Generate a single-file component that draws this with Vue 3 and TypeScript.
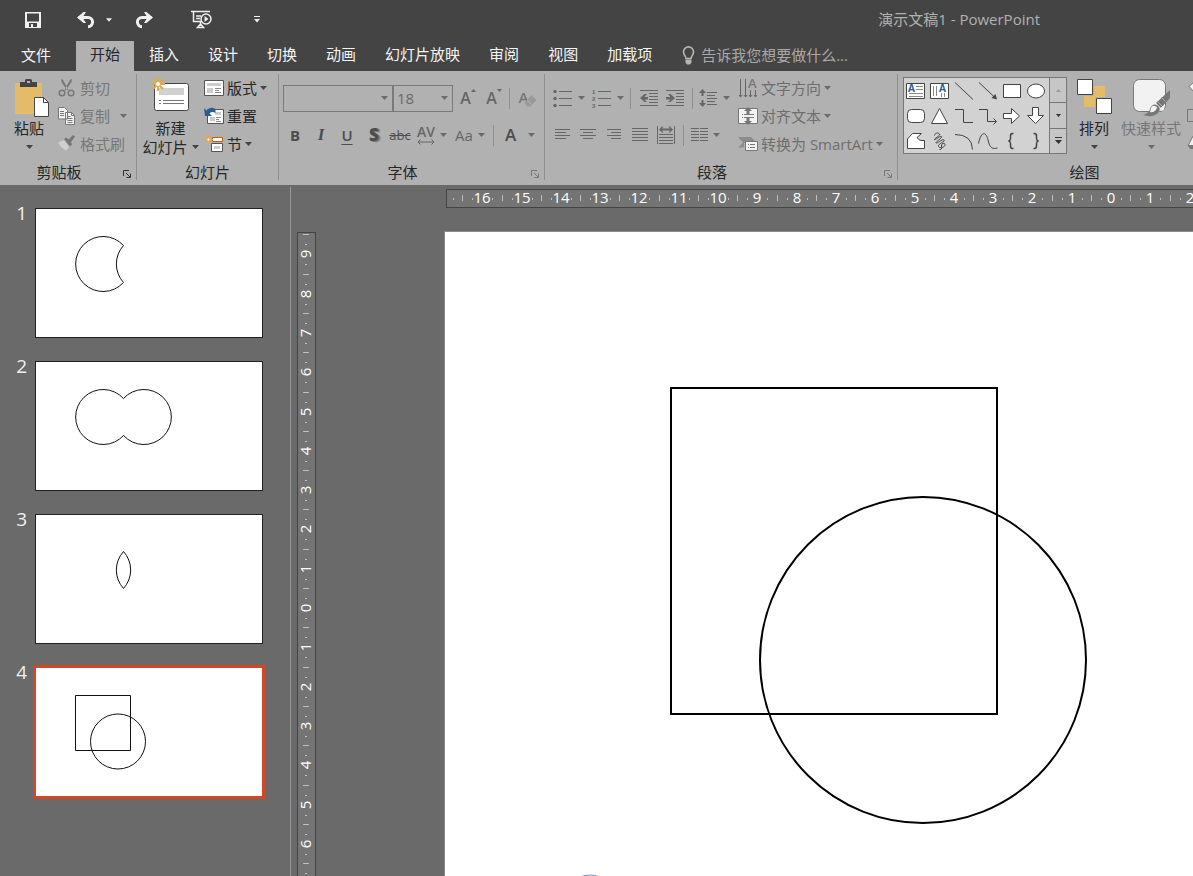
<script setup lang="ts">
import { computed, ref } from 'vue'

interface Slide {
  id: number
  path: string
}

interface Mark {
  pos: number
  label: string
}

const tabs: string[] = ['开始', '插入', '设计', '切换', '动画', '幻灯片放映', '审阅', '视图', '加载项']
const activeTab = ref('开始')
const query = ref('')
const fontName = ref('')
const fontSize = ref('18')

const slides: Slide[] = [
  { id: 1, path: 'M87.5 36.5A27.5 27.5 0 1 0 87.5 73.5A27.5 27.5 0 0 1 87.5 36.5Z' },
  { id: 2, path: 'M87.5 36.5A27.5 27.5 0 1 0 87.5 73.5A27.5 27.5 0 1 0 87.5 36.5Z' },
  { id: 3, path: 'M87.5 36.5A27.5 27.5 0 0 0 87.5 73.5A27.5 27.5 0 0 0 87.5 36.5Z' },
  { id: 4, path: 'M39.5 27.5h55v55h-55ZM54.5 73.5a27.5 27.5 0 1 0 55 0a27.5 27.5 0 1 0 -55 0Z' },
]
const selected = ref(4)

/* One centimetre on the rulers, in pixels */
const unit = 39.3
const half = Math.round(unit / 2)
const quarter = Math.round(unit / 4)

function marks(zero: number, before: number, after: number): Mark[] {
  const list: Mark[] = []
  for (let n = -before; n <= after; n++) {
    list.push({ pos: Math.round(zero + n * unit), label: String(Math.abs(n)) })
  }
  return list
}

const hMarks = computed(() => marks(664, 16, 17))
const vMarks = computed(() => marks(375, 9, 9))
</script>

<template>
  <div class="app">
    <header class="top">
      <div class="titlebar">
        <div class="qat">
          <button class="q q-save" aria-label="保存">
            <svg width="16" height="16" viewBox="0 0 16 16"><path fill="#f0f0f0" fill-rule="evenodd" d="M0 0h16v16H0ZM2 1.500v8h12v-8ZM4 11v4h2v-3h2v3h4v-4Z" /></svg>
          </button>
          <button class="q q-undo" aria-label="撤消">
            <svg width="18" height="16" viewBox="0 0 18 16"><path d="M1.500 5.500H11a4.500 4.500 0 0 1 0 9.200" fill="none" stroke="#f0f0f0" stroke-width="3" /><path d="M0 5.500L6.500 0h2.500L5.500 5.500L9 11H6.500Z" fill="#f0f0f0" /></svg>
          </button>
          <button class="q q-more" aria-label="撤消列表">
            <svg width="6" height="4" viewBox="0 0 7 4"><path d="M0 0h7L3.500 4z" fill="#f0f0f0" /></svg>
          </button>
          <button class="q q-redo" aria-label="恢复">
            <svg width="18" height="16" viewBox="0 0 18 16"><path d="M16.500 5.500H7a4.500 4.500 0 0 0 0 9.200" fill="none" stroke="#f0f0f0" stroke-width="3" /><path d="M18 5.500L11.500 0H9l3.500 5.500L9 11h2.500Z" fill="#f0f0f0" /></svg>
          </button>
          <button class="q q-show" aria-label="从头开始">
            <svg width="22" height="19" viewBox="0 0 22 19"><path d="M0 1.500h19M2.500 2v9.500h8M5 6h5M5 8.500h4M9.500 12v2l-3 3.500h6l-3-3.500" fill="none" stroke="#f0f0f0" stroke-width="1.500" /><circle cx="15" cy="9" r="5" fill="#444" stroke="#f0f0f0" stroke-width="1.500" /><path d="M13.500 6l4 3l-4 3z" fill="#f0f0f0" /></svg>
          </button>
          <button class="q q-custom" aria-label="自定义快速访问工具栏">
            <svg width="6" height="7" viewBox="0 0 6 7"><path d="M0 0h6v1H0zM0 3h6L3 6.500z" fill="#f0f0f0" /></svg>
          </button>
        </div>
        <h1 class="doc-title">演示文稿1 - PowerPoint</h1>
      </div>
      <nav class="tabs">
        <button class="tab file">文件</button>
        <button v-for="t in tabs" :key="t" class="tab" :class="{ active: t === activeTab }" @click="activeTab = t">{{ t }}</button>
        <label class="tell">
          <svg width="13" height="19" viewBox="0 0 13 19"><path d="M4 12.500C4 10 1.500 9 1.500 5.900a5 5 0 0 1 10 0C11.500 9 9 10 9 12.500Z" fill="none" stroke="#b5b5b5" stroke-width="1.600" /><path d="M3.500 13.500h6v3L8 18.500H5l-1.500-2z" fill="#b5b5b5" /></svg>
          <input v-model="query" type="text" aria-label="告诉我" placeholder="告诉我您想要做什么..." />
        </label>
      </nav>
    </header>

    <section class="ribbon">
      <div class="group clipboard">
        <div class="tools">
          <button class="big paste">
            <span class="pic">
              <svg width="34" height="38" viewBox="0 0 34 38"><path d="M0 4h27v31H0z" fill="#e3bb69" /><path d="M5 3h5V1.500Q10 0 11.500 0h4Q17 0 17 1.500V3h5v5H5z" fill="#444" /><path d="M12 2h3v2h-3z" fill="#b1b1b1" /><path d="M19.500 18.500h9l5 5v14h-14z" fill="#fff" stroke="#444" /><path d="M28.500 18.500v5h5" fill="none" stroke="#444" /></svg>
            </span>
            <span class="line1">粘贴</span>
            <span class="line2"><svg class="caret" viewBox="0 0 7 4"><path d="M0 0h7L3.500 4z" /></svg></span>
          </button>
          <div class="stack">
            <button class="row off">
              <svg width="18" height="18" viewBox="0 0 18 18"><g fill="none" stroke="#777"><circle cx="4" cy="14" r="2.800" stroke-width="1.500" /><circle cx="13" cy="14" r="2.800" stroke-width="1.500" /></g><path d="M3 0l2 1l4 7l1.500 3.500l-2-1L3.500 3zM14 0l-2 1l-4.500 8L6 12l2.500-1.500L13.500 3z" fill="#777" /></svg>
              <span>剪切</span>
            </button>
            <button class="row off">
              <svg width="18" height="18" viewBox="0 0 18 18"><path d="M.5.5h6l3 3v8.500h-9zM7.500 5.500h6l3 3v9h-9z" fill="#f2f2f2" stroke="#777" /><path d="M2 4.500h4M2 6.500h4M2 8.500h4M9.500 9.500h3M9.500 11.500h5M9.500 13.500h5M9.500 15.500h5M13.500 5.500v3h3" fill="none" stroke="#777" /></svg>
              <span>复制</span>
              <svg class="caret far" viewBox="0 0 7 4"><path d="M0 0h7L3.500 4z" /></svg>
            </button>
            <button class="row off">
              <svg width="18" height="18" viewBox="0 0 18 18"><path d="M0 7.500l6-2.500l5 7l-3 3.500Q3 13 0 7.500z" fill="#d0d0d0" /><path d="M6 4l2-1.500l2.500 2L15 0l2 1.500L13 7l1 2.500l-2 2z" fill="#777" /></svg>
              <span>格式刷</span>
            </button>
          </div>
        </div>
        <div class="caption"><span>剪贴板</span><button class="launch dark" aria-label="剪贴板选项"><svg width="8" height="8" viewBox="0 0 8 8"><path d="M.5 6V.5H6M3 3l4 4M7.500 3.500v4h-4" /></svg></button></div>
      </div>

      <div class="group slides-group">
        <div class="tools">
          <button class="big new-slide">
            <span class="pic">
              <svg width="39" height="36" viewBox="0 0 39 36"><rect x="3.500" y="6.500" width="34" height="27" rx="2" fill="#fff" stroke="#444" /><path d="M8 11h25v7H8z" fill="#d0d0d0" /><path d="M8 23.500h2M8 26.500h2M12 23.500h21M12 26.500h21" stroke="#777" /><path d="M7 0v14M0 7h14M2 2l10 10M12 2L2 12" stroke="#e3a74f" stroke-width="2" /><circle cx="7" cy="7" r="2.500" fill="#fff" stroke="#e3a74f" /></svg>
            </span>
            <span class="line1">新建</span>
            <span class="line2">幻灯片<svg class="caret" viewBox="0 0 7 4"><path d="M0 0h7L3.500 4z" /></svg></span>
          </button>
          <div class="stack">
            <button class="row">
              <svg width="20" height="18" viewBox="0 0 20 18"><path d="M.5 1.500h19v15H.5z" fill="#fff" stroke="#555" /><path d="M3 4h14v3H3zM3 9h6v5H3z" fill="#ccc" /><path d="M11 9.500h6M11 11.500h4M11 13.500h6" stroke="#888" /></svg>
              <span>版式</span><svg class="caret" viewBox="0 0 7 4"><path d="M0 0h7L3.500 4z" /></svg>
            </button>
            <button class="row">
              <svg width="20" height="18" viewBox="0 0 20 18"><path d="M3.500 2.500h16v14h-16z" fill="#fff" stroke="#555" /><path d="M11 5h6v3h-6zM6 10h5v4H6z" fill="#ccc" /><path d="M12 10.500h5M12 12.500h3M12 14.500h5" stroke="#888" /><path d="M0 1l1 8h7L5.500 6.500Q8 4 11.500 6V2Q6-1 2.500 3.500z" fill="#2b5c94" /></svg>
              <span>重置</span>
            </button>
            <button class="row">
              <svg width="20" height="18" viewBox="0 0 20 18"><path d="M8.500 2.500h10v4h-10z" fill="#fff" stroke="#c55a11" /><path d="M7.500 8.500h11v8h-11z" fill="#fff" stroke="#555" /><path d="M10 11h6v3h-6z" fill="#ccc" /><path d="M4.500 0v9M0 4.500h9M1.500 1.500l6 6M7.500 1.500l-6 6" stroke="#e3a74f" /><circle cx="4.500" cy="4.500" r="1.500" fill="#fff" stroke="#e3a74f" /></svg>
              <span>节</span><svg class="caret" viewBox="0 0 7 4"><path d="M0 0h7L3.500 4z" /></svg>
            </button>
          </div>
        </div>
        <div class="caption"><span>幻灯片</span></div>
      </div>

      <div class="group font-group">
        <div class="bars">
          <div class="bar">
            <label class="combo name"><input v-model="fontName" type="text" aria-label="字体" /><svg class="caret" viewBox="0 0 7 4"><path d="M0 0h7L3.500 4z" /></svg></label>
            <label class="combo size"><input v-model="fontSize" type="text" aria-label="字号" /><svg class="caret" viewBox="0 0 7 4"><path d="M0 0h7L3.500 4z" /></svg></label>
            <button class="cell w30 grow" aria-label="增大字号">A<svg width="5" height="3" viewBox="0 0 5 3"><path d="M0 3h5L2.500 0z" /></svg></button>
            <button class="cell w22 grow" aria-label="减小字号">A<svg width="5" height="3" viewBox="0 0 5 3"><path d="M0 0h5L2.500 3z" /></svg></button>
            <i class="sep w8"></i>
            <button class="cell w30 clear" aria-label="清除格式">A<svg width="13" height="13" viewBox="0 0 13 13"><path d="M7.500 0l5 5l-6 6.500H3L.5 8z" fill="#999" /><path d="M3 5l4.500 4.500" stroke="#b1b1b1" /></svg></button>
          </div>
          <div class="bar">
            <button class="cell w24 b">B</button>
            <button class="cell w28 i">I</button>
            <button class="cell w24 u">U</button>
            <button class="cell w30 s">S</button>
            <button class="cell w22 abc">abc</button>
            <button class="split glyph" aria-label="字符间距"><span class="av">AV<svg width="18" height="6" viewBox="0 0 18 6"><path d="M1 3h16M3.500.5L1 3l2.500 2.500M14.500.5L17 3l-2.500 2.500" /></svg></span><svg class="caret" viewBox="0 0 7 4"><path d="M0 0h7L3.500 4z" /></svg></button>
            <button class="split glyph" aria-label="更改大小写"><span>Aa</span><svg class="caret" viewBox="0 0 7 4"><path d="M0 0h7L3.500 4z" /></svg></button>
            <i class="sep w12"></i>
            <button class="split glyph color" aria-label="字体颜色"><span>A</span><svg class="caret" viewBox="0 0 7 4"><path d="M0 0h7L3.500 4z" /></svg></button>
          </div>
        </div>
        <div class="caption"><span>字体</span><button class="launch" aria-label="字体选项"><svg width="8" height="8" viewBox="0 0 8 8"><path d="M.5 6V.5H6M3 3l4 4M7.500 3.500v4h-4" /></svg></button></div>
      </div>

      <div class="group para-group">
        <div class="tools">
          <div class="bars para">
            <div class="bar">
              <button class="split list" aria-label="项目符号"><svg width="20" height="18" viewBox="0 0 20 18"><path d="M6 2.500h13M6 9.500h13M6 16.500h13" stroke="#666" /><g fill="#666"><circle cx="2" cy="2.500" r="1.700" /><circle cx="2" cy="9.500" r="1.700" /><circle cx="2" cy="16.500" r="1.700" /></g></svg><svg class="caret" viewBox="0 0 7 4"><path d="M0 0h7L3.500 4z" /></svg></button>
              <button class="split list" aria-label="编号"><svg width="20" height="18" viewBox="0 0 20 18"><path d="M6 2.500h13M6 9.500h13M6 16.500h13" stroke="#666" /><g class="digits"><text x="0" y="5">1</text><text x="0" y="12">2</text><text x="0" y="19">3</text></g></svg><svg class="caret" viewBox="0 0 7 4"><path d="M0 0h7L3.500 4z" /></svg></button>
              <i class="sep w12"></i>
              <button class="cell w26" aria-label="减少缩进"><svg width="18" height="16" viewBox="0 0 18 16"><path d="M0 .5h18M9 3.500h9M9 6.500h9M9 9.500h9M9 12.500h9M0 15.500h18" stroke="#666" /><path d="M0 8l4.500-4H7L4.500 7H8v2.500H4.500L7 12H4.500z" fill="#666" /></svg></button>
              <button class="cell w26" aria-label="增加缩进"><svg width="18" height="16" viewBox="0 0 18 16"><path d="M0 .5h18M10 3.500h8M10 6.500h8M10 9.500h8M10 12.500h8M0 15.500h18" stroke="#666" /><path d="M9 8L4.500 4H2l2.500 3H0v2.500h4.500L2 12h2.500z" fill="#666" /></svg></button>
              <i class="sep w8"></i>
              <button class="split spacing" aria-label="行距"><svg width="20" height="18" viewBox="0 0 20 18"><path d="M8 3.500h10M8 6.500h8M8 9.500h10M8 12.500h8M8 15.500h10" stroke="#666" /><path d="M3.500 0L7 4H4.500v3h-2V4H0zM3.500 18L0 14h2.500v-3h2v3H7z" fill="#666" /></svg><svg class="caret" viewBox="0 0 7 4"><path d="M0 0h7L3.500 4z" /></svg></button>
            </div>
            <div class="bar inset">
              <button class="cell w26" aria-label="左对齐"><svg width="16" height="12" viewBox="0 0 16 12"><path d="M1 .5h15M1 3.500h11M1 6.500h15M1 9.500h11" stroke="#666" /></svg></button>
              <button class="cell w26" aria-label="居中"><svg width="16" height="12" viewBox="0 0 16 12"><path d="M0 .5h16M3 3.500h10M0 6.500h16M3 9.500h10" stroke="#666" /></svg></button>
              <button class="cell w26" aria-label="右对齐"><svg width="16" height="12" viewBox="0 0 16 12"><path d="M1 .5h14M5 3.500h10M1 6.500h14M5 9.500h10" stroke="#666" /></svg></button>
              <button class="cell w26" aria-label="两端对齐"><svg width="16" height="14" viewBox="0 0 16 14"><path d="M0 .5h16M0 3.500h16M0 6.500h16M0 9.500h16M0 12.500h16" stroke="#666" /></svg></button>
              <button class="cell w26" aria-label="分散对齐"><svg width="18" height="18" viewBox="0 0 18 18"><path d="M.5 0v18M17.500 0v18M2 8.500h14M2 11.500h14M2 14.500h14M2 17.500h14" stroke="#666" /><path d="M2 3.500l3-3h1.500L5 2.500h8L11.500.5H13l3 3l-3 3h-1.500l1.500-2H5l1.500 2H5z" fill="#666" /></svg></button>
              <i class="sep w8"></i>
              <button class="split columns" aria-label="分栏"><svg width="18" height="14" viewBox="0 0 18 14"><path d="M0 .5h8M9 .5h8M0 3.500h8M9 3.500h8M0 6.500h8M9 6.500h8M0 9.500h8M9 9.500h8M0 12.500h8M9 12.500h8" stroke="#666" /></svg><svg class="caret" viewBox="0 0 7 4"><path d="M0 0h7L3.500 4z" /></svg></button>
            </div>
          </div>
          <div class="stack off">
            <button class="row off">
              <svg width="20" height="20" viewBox="0 0 20 20"><path d="M2.500 1v18M7.500 1v18M12.500 12v7M17.500 12v7" stroke="#666" /><path d="M1 17l1.500 2l1.500-2M6 17l1.500 2l1.500-2M11 17l1.500 2l1.500-2M16 17l1.500 2l1.500-2" fill="none" stroke="#666" /><text x="10" y="10" font-size="13" font-weight="600" fill="#777">A</text></svg>
              <span>文字方向</span><svg class="caret" viewBox="0 0 7 4"><path d="M0 0h7L3.500 4z" /></svg>
            </button>
            <button class="row off">
              <svg width="20" height="18" viewBox="0 0 20 18"><path d="M.5 1.500h19v15H.5z" fill="#f2f2f2" stroke="#777" /><path d="M4 7.500h1M6 7.500h10M4 10.500h1M6 10.500h10" stroke="#777" /><path d="M10 0l4 4h-2.500v3h-3V4H6zM10 18l-4-4h2.500v-3h3v3H14z" fill="#777" /></svg>
              <span>对齐文本</span><svg class="caret" viewBox="0 0 7 4"><path d="M0 0h7L3.500 4z" /></svg>
            </button>
            <button class="row off">
              <svg width="20" height="18" viewBox="0 0 20 18"><path d="M0 2h13l4 4l-3 2H6v4l-6 1l5-5.500z" fill="#8c8c8c" /><path d="M7.500 6.500h12v9h-12z" fill="#f2f2f2" stroke="#777" /><path d="M10 9.500h1M12 9.500h5M10 12.500h1M12 12.500h5" stroke="#777" /></svg>
              <span>转换为 SmartArt</span><svg class="caret" viewBox="0 0 7 4"><path d="M0 0h7L3.500 4z" /></svg>
            </button>
          </div>
        </div>
        <div class="caption"><span>段落</span><button class="launch" aria-label="段落选项"><svg width="8" height="8" viewBox="0 0 8 8"><path d="M.5 6V.5H6M3 3l4 4M7.500 3.500v4h-4" /></svg></button></div>
      </div>

      <div class="group draw-group">
        <div class="tools">
          <div class="gallery">
            <div class="shapes">
              <button aria-label="文本框"><svg viewBox="0 0 20 20"><path d="M.5 2.500h18v15H.5z" fill="#fff" stroke="#444" /><text x="2" y="11" font-size="10" font-weight="700" fill="#2b5c94">A</text><path d="M10 5.500h7M10 8.500h7M3 12.500h14M3 15.500h14" stroke="#888" /></svg></button>
              <button aria-label="竖排文本框"><svg viewBox="0 0 20 20"><path d="M.5 2.500h18v15H.5z" fill="#fff" stroke="#444" /><text x="9" y="11" font-size="10" font-weight="700" fill="#2b5c94">A</text><path d="M3.500 5v10M6.500 5v10M11.500 12v4M14.500 12v4" stroke="#888" /></svg></button>
              <button aria-label="直线"><svg viewBox="0 0 20 20"><path d="M1 1.500l18 17" /></svg></button>
              <button aria-label="箭头"><svg viewBox="0 0 20 20"><path d="M1 1.500l17 16" /><path d="M19 18.500l-5.500-1.500l4-4z" fill="#444" stroke="none" /></svg></button>
              <button aria-label="矩形"><svg viewBox="0 0 20 20"><path d="M1.500 3.500h17v13h-17z" fill="#fff" /></svg></button>
              <button aria-label="椭圆"><svg viewBox="0 0 20 20"><ellipse cx="10" cy="10" rx="8.500" ry="7" fill="#fff" /></svg></button>
              <button aria-label="圆角矩形"><svg viewBox="0 0 20 20"><rect x="1.500" y="3.500" width="17" height="13" rx="4" fill="#fff" /></svg></button>
              <button aria-label="三角形"><svg viewBox="0 0 20 20"><path d="M9.500 2.500l8 15h-16z" fill="#fff" /></svg></button>
              <button aria-label="肘形连接符"><svg viewBox="0 0 20 20"><path d="M1 3.500h8.500v13H19" /></svg></button>
              <button aria-label="肘形箭头"><svg viewBox="0 0 20 20"><path d="M1 3.500h8.500v12H18M15.500 12.500l3 3l-3 3" /></svg></button>
              <button aria-label="右箭头"><svg viewBox="0 0 20 20"><path d="M1.500 7.500h8v-5l8 7.500l-8 7.500v-5h-8z" fill="#fff" /></svg></button>
              <button aria-label="下箭头"><svg viewBox="0 0 20 20"><path d="M6.500 1.500v8h-5l8 8l8-8h-5v-8z" fill="#fff" /></svg></button>
              <button aria-label="任意多边形"><svg viewBox="0 0 20 20"><path d="M1.500 17.500v-9.500L6.500 2.500h9L11 6.500Q12.500 9 15 9.500h3.500v8z" fill="#fff" /></svg></button>
              <button aria-label="自由曲线"><svg viewBox="0 0 20 20"><path d="M4.500 4.500C5 1.500 8 1.500 9.500 3S4 7.500 4.500 8.500S10 4.500 11.500 5.500S5 11 6 12s6-4.500 8-3s-7 4-5.500 6.500s7 .5 6.500-2s-4-1-3.500 1.500s0 4-2 3.500" /></svg></button>
              <button aria-label="弧形"><svg viewBox="0 0 20 20"><path d="M1 3.500Q18 3.500 18.500 18.500" /></svg></button>
              <button aria-label="曲线"><svg viewBox="0 0 20 20"><path d="M.5 12.500C3 0 8 0 10 9S15 18 19.500 17" /></svg></button>
              <button aria-label="左大括号"><svg viewBox="0 0 20 20"><path d="M11.500 2.500h-1Q8.500 2.500 8.500 5v2.500Q8.500 9.500 6.500 10Q8.500 10.500 8.500 12.500V15Q8.500 17.500 10.500 17.500h1" stroke-width="1.500" /></svg></button>
              <button aria-label="右大括号"><svg viewBox="0 0 20 20"><path d="M7.500 2.500h1Q10.500 2.500 10.500 5v2.500Q10.500 9.500 12.500 10Q10.500 10.500 10.500 12.500V15Q10.500 17.500 8.500 17.500H7.500" stroke-width="1.500" /></svg></button>
            </div>
            <div class="scroller">
              <button class="off" aria-label="上一行"><svg width="5" height="3" viewBox="0 0 5 3"><path d="M0 3h5L2.500 0z" /></svg></button>
              <button aria-label="下一行"><svg width="5" height="3" viewBox="0 0 5 3"><path d="M0 0h5L2.500 3z" /></svg></button>
              <button aria-label="其他"><svg width="7" height="7" viewBox="0 0 7 7"><path d="M0 0h7v1H0zM0 3h7L3.500 7z" /></svg></button>
            </div>
          </div>
          <button class="big arrange">
            <span class="pic">
              <svg width="35" height="36" viewBox="0 0 35 36"><path d="M17 7h11v11H17zM7 17h11v11H7z" fill="#e3bb69" /><path d="M.5.5h15v15H.5zM19.500 19.500h15v15h-15z" fill="#fff" stroke="#444" /></svg>
            </span>
            <span class="line1">排列</span>
            <span class="line2"><svg class="caret" viewBox="0 0 7 4"><path d="M0 0h7L3.500 4z" /></svg></span>
          </button>
          <button class="big quick off">
            <span class="pic">
              <svg width="37" height="38" viewBox="0 0 37 38"><rect x=".5" y=".5" width="32" height="32" rx="6" fill="#f2f2f2" stroke="#777" /><path d="M37 11v8l-9 10l-5-5zM10 36q6-2 7-6q2-6 7-4q5 3 1 8q-5 5-15 2z" fill="#777" /><path d="M18 29q1-3 4-2l2 1l-1 3q-3 3-6 2zM27 30l3-3q3 3-1 5z" fill="#f2f2f2" /><path d="M24 22l5 5M28 18l4 4" stroke="#b1b1b1" /></svg>
            </span>
            <span class="line1">快速样式</span>
            <span class="line2"><svg class="caret" viewBox="0 0 7 4"><path d="M0 0h7L3.500 4z" /></svg></span>
          </button>
          <div class="stack">
            <button class="row off" aria-label="形状填充"><svg width="18" height="18" viewBox="0 0 18 18"><path d="M3 7.500L9 2l6 6l-6 6z" fill="#f2f2f2" stroke="#777" /></svg></button>
            <button class="row off" aria-label="形状轮廓"><svg width="18" height="18" viewBox="0 0 18 18"><path d="M1.500 2.500h14v12h-14z" fill="none" stroke="#777" /></svg></button>
            <button class="row off" aria-label="形状效果"><svg width="18" height="18" viewBox="0 0 18 18"><path d="M7 1h10v10H2z" fill="#f2f2f2" stroke="#777" /><path d="M2 10h14v4H4z" fill="#777" /></svg></button>
          </div>
        </div>
        <div class="caption"><span>绘图</span></div>
      </div>
    </section>

    <main class="work">
      <ol class="panel">
        <li v-for="s in slides" :key="s.id">
          <span class="num">{{ s.id }}</span>
          <button class="thumb" :class="{ on: s.id === selected }" :aria-label="'幻灯片 ' + s.id" @click="selected = s.id">
            <svg width="226" height="128" viewBox="0 0 226 128"><path :d="s.path" fill="none" stroke="#111" /></svg>
          </button>
        </li>
      </ol>
      <div class="editor">
        <div class="ruler h">
          <svg width="100%" height="17">
            <rect x="6" y="8" width="1" height="2" />
            <g v-for="m in hMarks" :key="m.pos">
              <text :x="m.pos" y="13" text-anchor="middle">{{ m.label }}</text>
              <rect :x="m.pos - quarter" y="8" width="1" height="2" />
              <rect :x="m.pos + quarter" y="8" width="1" height="2" />
              <rect :x="m.pos - half" y="5" width="1" height="6" />
            </g>
          </svg>
        </div>
        <div class="ruler v">
          <svg width="17" height="100%">
            <g v-for="m in vMarks" :key="m.pos">
              <text :transform="`translate(13 ${m.pos}) rotate(-90)`" text-anchor="middle">{{ m.label }}</text>
              <rect x="7" :y="m.pos - quarter" width="2" height="1" />
              <rect x="7" :y="m.pos + quarter" width="2" height="1" />
              <rect x="5" :y="m.pos - half" width="6" height="1" />
            </g>
          </svg>
        </div>
        <div class="slide">
          <svg width="100%" height="100%">
            <rect x="226" y="156" width="326" height="326" />
            <circle cx="478" cy="428" r="163" />
            <circle class="handle" cx="145" cy="668" r="25" />
          </svg>
        </div>
      </div>
    </main>
  </div>
</template>

<style>
body {
  margin: 0;
  overflow: hidden;
}
</style>

<style scoped>
.app {
  height: 100vh;
  display: flex;
  flex-direction: column;
  overflow: hidden;
  background: #6a6a6a;
  color: #262626;
  font: 15px/20px "Open Sans", "Noto Sans CJK SC", sans-serif;
}
.app * {
  box-sizing: border-box;
}
button,
input {
  font: inherit;
  color: inherit;
  background: none;
  border: 0;
  padding: 0;
  margin: 0;
}
svg {
  display: block;
  flex: none;
  overflow: visible;
}
.top {
  flex: none;
  background: #444;
}
.titlebar {
  height: 41px;
  display: flex;
  align-items: center;
  justify-content: space-between;
  padding: 0 153px 2px 24px;
}
.qat {
  display: flex;
  align-items: center;
}
.q {
  display: flex;
  justify-content: center;
}
.q-save {
  width: 18px;
}
.q-undo {
  width: 18px;
  margin-left: 35px;
}
.q-more {
  width: 12px;
  margin-left: 8px;
}
.q-redo {
  width: 18px;
  margin-left: 20px;
}
.q-show {
  width: 22px;
  margin-left: 38px;
}
.q-custom {
  width: 12px;
  margin-left: 38px;
}
.doc-title {
  margin: 0;
  padding-bottom: 2px;
  font-size: 15px;
  font-weight: 400;
  color: #b1b1b1;
}
.tabs {
  height: 30px;
  display: flex;
  gap: 1px;
}
.tab {
  padding: 0 14px 4px;
  color: #f4f4f4;
  white-space: nowrap;
}
.tab.file {
  padding: 0 24px 2px 21px;
}
.tab.active {
  background: #b1b1b1;
  color: #262626;
}
.tell {
  display: flex;
  align-items: center;
  gap: 6px;
  margin-left: 15px;
  padding-bottom: 2px;
}
.tell input {
  width: 180px;
  outline: none;
}
.tell input::placeholder {
  color: #a8a8a8;
  opacity: 1;
}
.ribbon {
  flex: none;
  height: 114px;
  padding: 3px 0 5px;
  display: flex;
  overflow: hidden;
  background: #b1b1b1;
}
.group {
  flex: none;
  display: flex;
  flex-direction: column;
  border-right: 1px solid #8f8f8f;
}
.clipboard {
  width: 137px;
}
.slides-group {
  width: 142px;
}
.font-group {
  width: 266px;
}
.para-group {
  width: 353px;
}
.draw-group {
  width: 374px;
}
.tools {
  flex: 1;
  display: flex;
  align-items: flex-start;
}
.caption {
  display: flex;
  align-items: center;
  height: 16px;
  line-height: 16px;
}
.caption span {
  flex: 1;
  text-align: center;
}
.launch {
  width: 18px;
  display: flex;
  justify-content: center;
  padding-top: 3px;
}
.launch path {
  fill: none;
  stroke: #777;
}
.launch.dark path {
  stroke: #333;
}
.big {
  display: flex;
  flex-direction: column;
  align-items: center;
  white-space: nowrap;
}
.pic {
  height: 44px;
  display: flex;
  align-items: flex-start;
  padding-top: 5px;
}
.line1 {
  height: 20px;
}
.line2 {
  height: 18px;
  line-height: 18px;
  display: flex;
  align-items: center;
  gap: 4px;
}
.paste {
  width: 42px;
  margin: 0 8px 0 8px;
}
.paste .pic {
  padding-left: 6px;
}
.new-slide {
  width: 57px;
  margin: 0 5px;
}
.new-slide .pic {
  padding-top: 3px;
}
.caret {
  width: 7px;
  height: 4px;
  fill: #444;
}
.off .caret,
.split .caret,
.combo .caret {
  fill: #6a6a6a;
}
.off {
  color: #777;
}
.stack {
  display: flex;
  flex-direction: column;
  align-items: flex-start;
}
.row {
  height: 28px;
  display: flex;
  align-items: center;
  gap: 3px;
  white-space: nowrap;
}
.clipboard .row {
  gap: 4px;
}
.caret.far {
  margin-left: 6px;
}
.para-group .row.off {
  color: #6e6e6e;
}
.bars {
  flex: 1;
  padding: 11px 0 0 4px;
  color: #4d4d4d;
}
.bars.para {
  flex: none;
  width: 193px;
  padding-left: 1px;
}
.bar {
  height: 27px;
  display: flex;
  align-items: center;
  margin-bottom: 10px;
}
.bar.inset {
  padding-left: 3px;
}
.combo {
  height: 27px;
  display: flex;
  align-items: center;
  border: 1px solid #7a7a7a;
  padding: 0 4px 2px 3px;
}
.combo.name {
  width: 110px;
}
.combo.size {
  width: 60px;
}
.combo input {
  flex: 1;
  min-width: 0;
  outline: none;
  color: #6a6a6a;
}
.cell {
  height: 27px;
  display: flex;
  align-items: center;
  justify-content: center;
  padding-bottom: 2px;
}
.w8 {
  width: 8px;
}
.w12 {
  width: 12px;
}
.w22 {
  width: 22px;
}
.w24 {
  width: 24px;
}
.w26 {
  width: 26px;
}
.w28 {
  width: 28px;
}
.w30 {
  width: 30px;
}
.sep {
  height: 21px;
  display: flex;
  justify-content: center;
}
.sep::before {
  content: "";
  width: 1px;
  background: #909090;
}
.grow {
  font-size: 16px;
  font-weight: 600;
  color: #666;
}
.grow svg {
  align-self: flex-start;
  margin-top: 4px;
  fill: #666;
}
.clear {
  font-size: 15px;
  font-weight: 600;
  color: #777;
  padding-bottom: 4px;
}
.clear svg {
  align-self: flex-end;
  margin-left: -4px;
}
.b {
  font-weight: 700;
}
.i {
  font-family: "Liberation Serif", serif;
  font-style: italic;
  font-weight: 700;
  font-size: 17px;
}
.u {
  font-weight: 600;
  text-decoration: underline;
  text-underline-offset: 3px;
}
.s {
  font-weight: 800;
  font-size: 17px;
  text-shadow: 2px 1px 1px #777;
}
.abc {
  font-size: 13px;
  text-decoration: line-through;
}
.split {
  height: 27px;
  display: flex;
  align-items: center;
  padding-bottom: 2px;
}
.glyph {
  width: 38px;
  padding-left: 6px;
  gap: 5px;
  color: #666;
}
.glyph > span {
  width: 18px;
  text-align: left;
}
.glyph .av {
  font-size: 14px;
  font-weight: 600;
  line-height: 14px;
}
.av path {
  fill: none;
  stroke: #666;
}
.color {
  color: #4d4d4d;
  font-size: 17px;
  font-weight: 600;
}
.list {
  padding-left: 7px;
  gap: 5px;
}
.digits {
  fill: #666;
  font: 700 6px "Liberation Sans", sans-serif;
}
.spacing {
  padding-left: 3px;
  gap: 4px;
}
.columns {
  padding-left: 4px;
  gap: 4px;
}
.gallery {
  width: 164px;
  height: 77px;
  margin: 3px 5px 0 5px;
  display: flex;
  border: 1px solid #777;
  background: #d2d2d2;
}
.shapes {
  flex: 1;
  display: grid;
  grid-template-columns: repeat(6, 24px);
  grid-template-rows: repeat(3, 1fr);
}
.shapes button {
  display: flex;
  align-items: center;
  justify-content: center;
}
.shapes svg {
  width: 20px;
  height: 20px;
  fill: none;
  stroke: #444;
}
.shapes text {
  stroke: none;
}
.scroller {
  width: 17px;
  display: flex;
  flex-direction: column;
  border-left: 1px solid #777;
  background: #c6c6c6;
}
.scroller button {
  flex: 1;
  display: flex;
  align-items: center;
  justify-content: center;
  fill: #333;
}
.scroller button + button {
  border-top: 1px solid #777;
}
.scroller .off {
  fill: #999;
}
.arrange {
  width: 44px;
}
.quick {
  width: 68px;
  margin: 0 1px;
}
.work {
  flex: 1;
  min-height: 0;
  display: flex;
}
.panel {
  flex: none;
  width: 291px;
  margin: 2px 0 0;
  padding: 21px 0 0;
  border-right: 1px solid #999;
  list-style: none;
}
.panel li {
  display: flex;
  height: 130px;
  margin-bottom: 23px;
}
.num {
  width: 35px;
  padding-right: 8px;
  font-size: 19px;
  line-height: 10px;
  color: #f0f0f0;
  text-align: right;
}
.thumb {
  width: 228px;
  height: 130px;
  border: 1px solid #222;
  background: #fff;
}
.thumb.on {
  border-color: #d24726;
  box-shadow: 0 0 0 2px #d24726;
}
.editor {
  flex: 1;
  min-width: 0;
  display: grid;
  grid-template-columns: 19px 1fr;
  grid-template-rows: 19px 1fr;
  column-gap: 128px;
  row-gap: 23px;
  padding: 4px 0 0 6px;
  overflow: hidden;
}
.ruler {
  background: #747474;
  border: 1px solid #444;
}
.ruler.h {
  grid-column: 2;
  margin-left: 2px;
  border-right: 0;
}
.ruler.v {
  grid-row: 2;
  margin-top: 1px;
  border-bottom: 0;
}
.ruler text {
  fill: #fff;
  font-size: 15px;
}
.ruler rect {
  fill: #c0c0c0;
}
.slide {
  grid-row: 2;
  border: 1px solid #8c8c8c;
  border-width: 1px 0 0 1px;
  background: #fff;
  overflow: hidden;
}
.slide svg {
  fill: none;
  stroke: #000;
  stroke-width: 2px;
}
.slide .handle {
  stroke: #5b9bd5;
  stroke-width: 1px;
}
</style>
